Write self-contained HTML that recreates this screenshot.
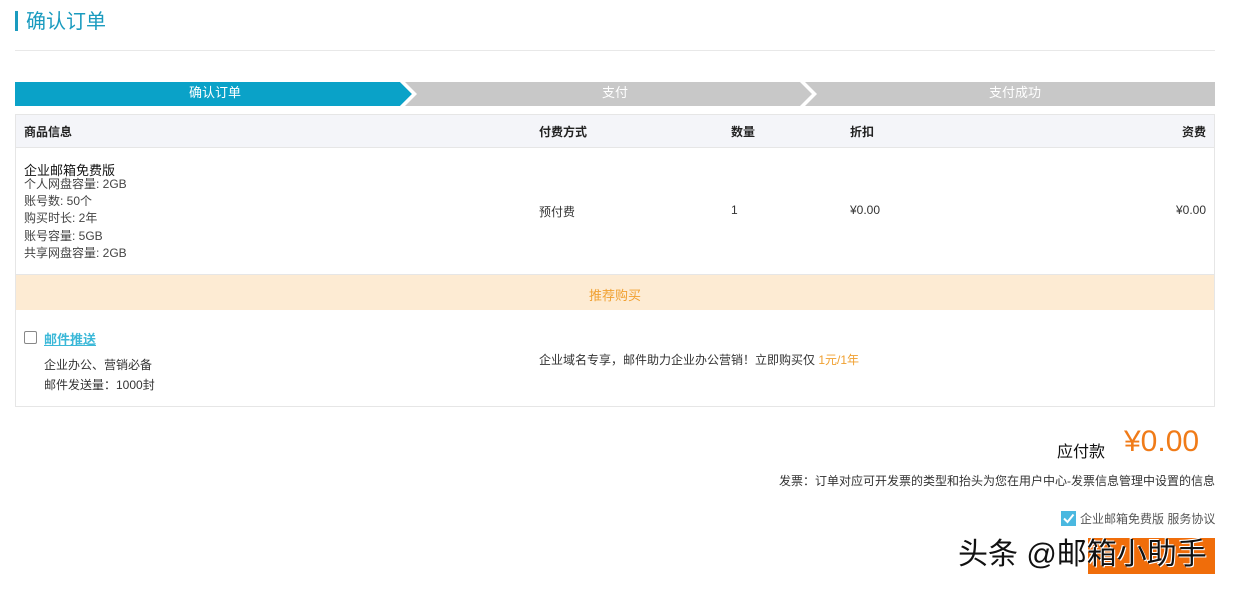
<!DOCTYPE html>
<html><head><meta charset="utf-8"><style>
*{margin:0;padding:0;box-sizing:border-box}
body{width:1233px;height:591px;background:#fff;font-family:"Liberation Sans","Noto Sans CJK SC",sans-serif;font-size:12px;color:#333;position:relative;overflow:hidden}
.a{position:absolute;white-space:nowrap}
</style></head><body>
<div class="a" style="left:15px;top:11px;width:3px;height:20px;background:#1a9bbf"></div>
<div class="a" style="left:26px;top:9px;font-size:20px;color:#1a9bbf;line-height:26px">确认订单</div>
<div class="a" style="left:15px;top:50px;width:1200px;height:1px;background:#e8e8e8"></div>
<svg class="a" style="left:15px;top:82px" width="1200" height="24">
<rect x="0" y="0" width="1200" height="24" fill="#c8c8c8"/>
<polygon points="0,0 385,0 397,12 385,24 0,24" fill="#0aa2c8"/>
<polygon points="385,0 390,0 402,12 390,24 385,24 397,12" fill="#fff"/>
<polygon points="785,0 790,0 802,12 790,24 785,24 797,12" fill="#fff"/>
</svg>
<div class="a" style="left:15px;top:81px;width:400px;line-height:24px;text-align:center;color:#fff;font-size:13px">确认订单</div>
<div class="a" style="left:415px;top:81px;width:400px;line-height:24px;text-align:center;color:#fff;font-size:13px">支付</div>
<div class="a" style="left:815px;top:81px;width:400px;line-height:24px;text-align:center;color:#fff;font-size:13px">支付成功</div>
<div class="a" style="left:15px;top:114px;width:1200px;height:293px;border:1px solid #e6e6e6"></div>
<div class="a" style="left:16px;top:115px;width:1198px;height:33px;background:#f4f5f9;border-bottom:1px solid #e6e6e6"></div>
<div class="a" style="left:24px;top:123px;font-weight:bold;color:#222">商品信息</div>
<div class="a" style="left:539px;top:123px;font-weight:bold;color:#222">付费方式</div>
<div class="a" style="left:731px;top:123px;font-weight:bold;color:#222">数量</div>
<div class="a" style="left:850px;top:123px;font-weight:bold;color:#222">折扣</div>
<div class="a" style="left:1170px;top:123px;width:36px;text-align:right;font-weight:bold;color:#222">资费</div>
<div class="a" style="left:24px;top:160px;font-size:13px;color:#111">企业邮箱免费版</div>
<div class="a" style="left:24px;top:176px;line-height:17.2px;color:#444">个人网盘容量: 2GB<br>账号数: 50个<br>购买时长: 2年<br>账号容量: 5GB<br>共享网盘容量: 2GB</div>
<div class="a" style="left:539px;top:203px">预付费</div>
<div class="a" style="left:731px;top:203px">1</div>
<div class="a" style="left:850px;top:203px">¥0.00</div>
<div class="a" style="left:1150px;top:203px;width:56px;text-align:right">¥0.00</div>
<div class="a" style="left:16px;top:274px;width:1198px;height:36px;background:#fdebd3;border-top:1px solid #e6e6e6"></div>
<div class="a" style="left:16px;top:285px;width:1198px;text-align:center;color:#f0a030;font-size:13px">推荐购买</div>
<div class="a" style="left:24px;top:331px;width:13px;height:13px;border:1.5px solid #888;border-radius:2px"></div>
<div class="a" style="left:44px;top:329px;font-size:13px;font-weight:bold;color:#3bb8d8;text-decoration:underline">邮件推送</div>
<div class="a" style="left:44px;top:356px;color:#333">企业办公、营销必备</div>
<div class="a" style="left:44px;top:376px;color:#333">邮件发送量：1000封</div>
<div class="a" style="left:539px;top:351px">企业域名专享，邮件助力企业办公营销！立即购买仅 <span style="color:#f0a030">1元/1年</span></div>
<div class="a" style="left:1057px;top:438px;font-size:16px;color:#111">应付款</div>
<div class="a" style="left:1124px;top:425px;font-size:30px;color:#f07b18">¥0.00</div>
<div class="a" style="left:700px;top:472px;width:515px;text-align:right;color:#333">发票：订单对应可开发票的类型和抬头为您在用户中心-发票信息管理中设置的信息</div>
<div class="a" style="left:1061px;top:511px;width:15px;height:15px;background:#4ab8e0"></div>
<svg class="a" style="left:1061px;top:511px" width="15" height="15"><path d="M3 7.5L6.5 11L12.5 3.5" stroke="#fff" stroke-width="2" fill="none"/></svg>
<div class="a" style="left:1080px;top:510px;color:#555">企业邮箱免费版 服务协议</div>
<div class="a" style="left:1088px;top:538px;width:127px;height:36px;background:#f06d0a"></div>
<div class="a" style="left:958px;top:536px;font-size:30px;line-height:38px;color:#111;text-shadow:1px 1px 0 #fff,-1px -1px 0 #fff">头条 @邮箱小助手</div>
</body></html>
